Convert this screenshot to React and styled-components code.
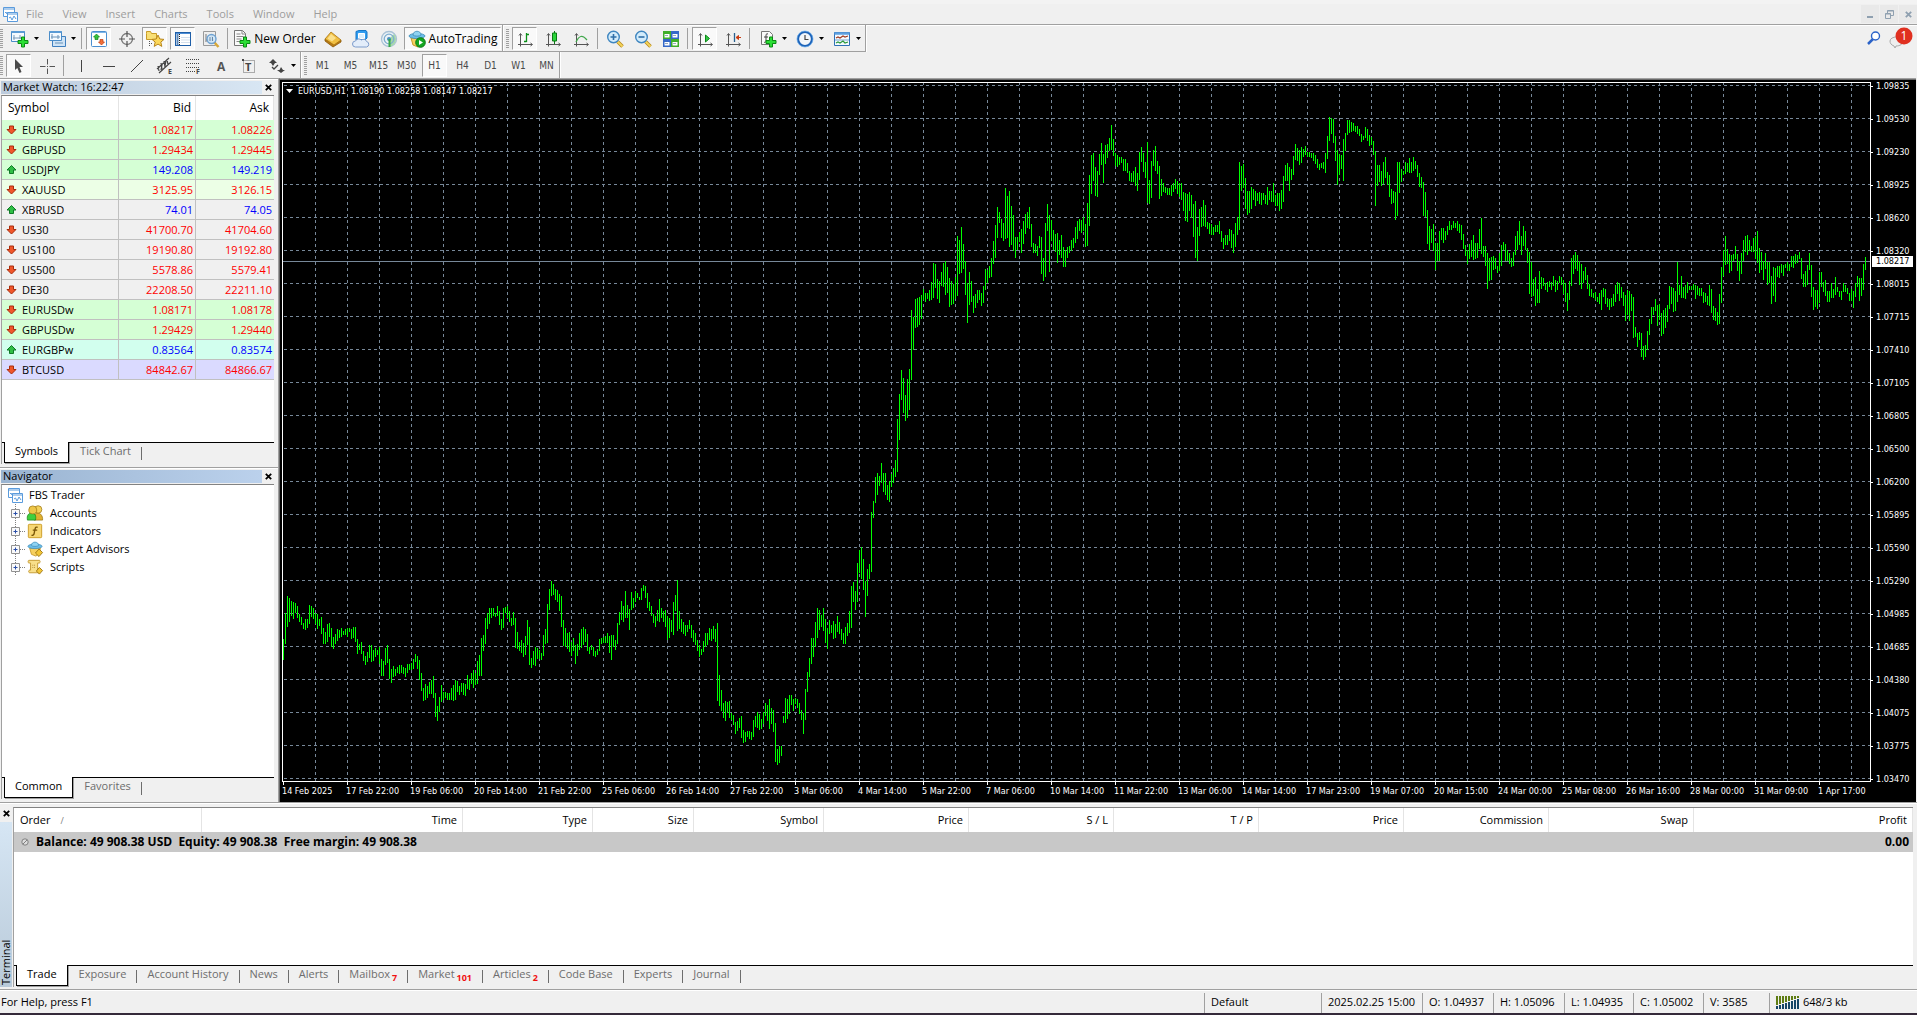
import React from 'react'
import styled, { createGlobalStyle, css } from 'styled-components'

const GlobalStyle = createGlobalStyle`
    * {
        box-sizing: border-box;
    }
    body {
        margin: 0;
        background: #f0f0f0;
        color: #000;
        font: 11px/16px 'Open Sans', 'Noto Sans', sans-serif;
    }
    button {
        font: inherit;
        color: inherit;
        margin: 0;
        padding: 0;
        border: 0;
        background: none;
    }
    table {
        border-collapse: separate;
        border-spacing: 0;
        table-layout: fixed;
        width: 100%;
    }
    svg {
        display: block;
        flex: none;
    }
`

const Page = styled.div`
    display: flex;
    flex-direction: column;
    min-height: 100vh;
    border-top: 4px solid #f3f3f3;
    border-bottom: 2px solid #352a3a;
`

/* ---------- menu ---------- */

const MenuBar = styled.header`
    display: flex;
    align-items: center;
    height: 20px;
    padding-left: 3px;
`

const MenuNav = styled.nav`
    display: flex;
    flex: 1;
    gap: 1px;
`

const MenuItem = styled.button`
    color: #9d9d9d;
    padding: 0 9px;
    &:first-child {
        padding-left: 8px;
    }
`

const WindowButtons = styled.div`
    display: flex;
    gap: 1px;
`

const WindowButton = styled.button`
    display: flex;
    align-items: center;
    justify-content: center;
    width: 18px;
    height: 18px;
    background: #e9e9e9;
`

/* ---------- toolbars ---------- */

const ToolRow = styled.div`
    display: flex;
    height: ${(p) => (p.$first ? 28 : 26)}px;
    border-top: ${(p) => (p.$first ? '1px solid #a0a0a0' : '0')};
    box-shadow: ${(p) => (p.$first ? 'inset 0 1px #fff' : 'none')};
`

const ToolGroup = styled.div`
    display: flex;
    align-items: center;
    gap: 3px;
    padding: 1px ${(p) => p.$end || 0}px 0 0;
    border-right: 1px solid #a0a0a0;
    border-bottom: ${(p) => (p.$line ? '1px solid #a0a0a0' : '0')};
    box-shadow: 1px 0 #fff;
`

const Grip = styled.div`
    width: 3px;
    height: 20px;
    margin-left: ${(p) => p.$before || 0}px;
    background: repeating-linear-gradient(#a0a0a0 0 1px, #f0f0f0 1px 2px);
`

const Divider = styled.div`
    width: 1px;
    height: 21px;
    margin: 0 1px;
    background: #a0a0a0;
`

const ToolButton = styled.button`
    display: flex;
    align-items: center;
    justify-content: center;
    gap: ${(p) => p.$gap || 3}px;
    width: ${(p) => p.$width || 25}px;
    height: 23px;
    border: 1px solid transparent;
    font-size: 12px;
    white-space: nowrap;
    ${(p) =>
        p.$pressed &&
        css`
            background: #f9f9f9;
            border-color: #a0a0a0 #fff #fff #a0a0a0;
        `}
`

const PeriodButton = styled(ToolButton)`
    font: 10px 'DejaVu Sans Condensed', 'DejaVu Sans', sans-serif;
    color: #4a4a4a;
`

const DropPair = styled.div`
    display: flex;
    margin-right: ${(p) => (p.$tight ? -3 : 0)}px;
`

const Spacer = styled.div`
    flex: 1;
`

const RightTools = styled.div`
    display: flex;
    align-items: center;
    gap: 8px;
    padding: 0 4px 2px 0;
`

/* ---------- docked panels ---------- */

const Workspace = styled.main`
    display: flex;
    flex: 1;
`

const Dock = styled.aside`
    display: flex;
    flex-direction: column;
    width: 279px;
    border-right: 1px solid #a0a0a0;
`

const DockPanel = styled.section`
    display: flex;
    flex-direction: column;
    flex: ${(p) => (p.$grow ? '1' : '0 0 389px')};
    border-top: 1px solid #a0a0a0;
    box-shadow: inset 0 1px #fff;
    padding: 2px 4px 3px 1px;
`

const DockTitle = styled.div`
    display: flex;
    align-items: center;
    height: 13px;
    margin: 0 -1px 1px 0;
`

const DockCaption = styled.h2`
    flex: 1;
    height: 13px;
    margin: 0;
    padding-left: 2px;
    font: 11px/12px 'Open Sans', sans-serif;
    background: linear-gradient(90deg, ${(p) => p.$from}, ${(p) => p.$to});
`

const CloseButton = styled.button`
    display: flex;
    align-items: center;
    justify-content: center;
    width: 13px;
    height: 13px;
`

const DockFrame = styled.div`
    display: flex;
    flex-direction: column;
    flex: 1;
    min-height: 0;
    background: #fff;
    border-top: 1px solid #828282;
    border-left: 1px solid #a0a0a0;
`

const FrameBody = styled.div`
    flex: 1;
    min-height: 0;
`

const TabBar = styled.div`
    display: flex;
    gap: 1px;
    height: 22px;
    padding-left: 2px;
    background: #f0f0f0;
    border-top: 1px solid #000;
`

const Tab = styled.button`
    position: relative;
    height: 20px;
    margin-top: -1px;
    padding: 0 10px 2px;
    color: #6d6d6d;
    white-space: nowrap;
    &::after {
        content: '';
        position: absolute;
        right: -1px;
        top: 5px;
        height: 13px;
        border-right: 1px solid #6d6d6d;
    }
    ${(p) =>
        p.$active &&
        css`
            height: 21px;
            color: #000;
            background: #fff;
            border: solid #000;
            border-width: 0 1px 1px;
            box-shadow: 1px 1px #a0a0a0;
            &::after {
                display: none;
            }
        `}
`

const TabCount = styled.sub`
    margin-left: 2px;
    font-size: 9px;
    line-height: 1px;
    font-weight: bold;
    color: #f01010;
`

const QuoteTable = styled.table`
    th {
        height: 24px;
        padding: 0 4px 0 6px;
        font-size: 12px;
        font-weight: normal;
        text-align: right;
        border-right: 1px solid #e4e4e4;
    }
    th:first-child {
        text-align: left;
    }
`

const QuoteRow = styled.tr`
    background: ${(p) => p.$bg};
    td {
        height: 20px;
        padding: 0 2px;
        text-align: right;
        line-height: 16px;
        color: ${(p) => (p.$up ? '#0000ff' : '#ff0000')};
        border-right: 1px solid #c0c0c0;
        border-bottom: 1px solid #c0c0c0;
    }
    td:last-child {
        border-right: 0;
    }
    td:first-child {
        color: #000;
    }
`

const SymbolCell = styled.div`
    display: flex;
    align-items: center;
    gap: 5px;
    padding-left: 2px;
`

const Tree = styled.ul`
    margin: 0;
    padding: 1px 0 0 6px;
    list-style: none;
`

const TreeRoot = styled.li`
    display: flex;
    align-items: center;
    gap: 6px;
    height: 18px;
`

const TreeNode = styled.li`
    display: flex;
    align-items: center;
    height: 18px;
    padding-left: 3px;
`

const NodeText = styled.span`
    padding-left: 7px;
`

/* ---------- chart ---------- */

const ChartWindow = styled.section`
    display: grid;
    grid-template: minmax(0, 1fr) 20px / minmax(0, 1fr) 45px;
    flex: 1;
    min-width: 0;
    padding: 2px 0 0 2px;
    margin-right: 1px;
    border-top: 1px solid #a0a0a0;
    border-left: 1px solid #696969;
    background: #000;
    box-shadow: inset 0 1px #696969;
    color: #fff;
    font: 9px/10px 'DejaVu Sans Condensed', 'DejaVu Sans', sans-serif;
`

const Plot = styled.div`
    position: relative;
    display: flex;
    margin-top: 1px;
    border: 1px solid #fff;
`

const PlotSvg = styled.svg`
    flex: 1;
    width: 100%;
    height: 100%;
`

const ChartTitle = styled.div`
    position: absolute;
    top: 3px;
    left: 3px;
    display: flex;
    align-items: center;
    gap: 5px;
    white-space: pre;
`

const PriceAxis = styled.div`
    position: relative;
    grid-row: 1 / 3;
    grid-column: 2;
    min-height: 0;
    overflow: hidden;
`

const PriceMark = styled.div`
    display: flex;
    align-items: center;
    gap: 3px;
    height: 10px;
    & + & {
        margin-top: 23px;
    }
    &::before {
        content: '';
        width: 2px;
        height: 1px;
        background: #fff;
    }
`

const LastPrice = styled.div`
    position: absolute;
    left: 1px;
    padding: 0 4px;
    line-height: 11px;
    color: #000;
    background: #fff;
`

const TimeAxis = styled.div`
    display: flex;
    overflow: hidden;
`

const TimeMark = styled.div`
    flex: none;
    width: 64px;
    white-space: nowrap;
    &::before {
        content: '';
        display: block;
        width: 1px;
        height: 3px;
        margin: 0 0 1px 1px;
        background: #fff;
    }
`

/* ---------- terminal ---------- */

const Terminal = styled.section`
    display: flex;
    height: 187px;
    padding: 4px 1px 2px 0;
    border-top: 1px solid #a0a0a0;
    box-shadow: inset 0 1px #fff;
`

const TerminalStrip = styled.div`
    display: flex;
    flex-direction: column;
    width: 13px;
`

const TerminalCaption = styled.h2`
    flex: 1;
    width: 12px;
    margin: 2px 0 0;
    font: 11px/12px 'Open Sans', sans-serif;
    writing-mode: vertical-rl;
    transform: rotate(180deg);
    padding-top: 2px;
    background: linear-gradient(#b9cad9, #d6e6f4);
`

const TerminalFrame = styled(DockFrame)`
    margin-right: 3px;
`

const TradeTable = styled.table`
    th {
        height: 24px;
        padding: 0 5px;
        font-weight: normal;
        text-align: right;
        border-right: 1px solid #e4e4e4;
    }
    th:first-child {
        text-align: left;
        padding-left: 6px;
    }
    td {
        height: 20px;
        padding: 0 4px 0 7px;
        font-size: 12px;
        font-weight: bold;
        text-align: right;
        white-space: pre;
        background: #c8c8c8;
    }
`

const BalanceCell = styled.div`
    display: flex;
    align-items: center;
    gap: 7px;
`

const SortMark = styled.span`
    margin-left: 10px;
    font-size: 9px;
    color: #808080;
`

const StatusBar = styled.footer`
    display: flex;
    height: 24px;
    border-top: 1px solid #a0a0a0;
    box-shadow: inset 0 1px #fff;
`

const StatusCell = styled.div`
    display: flex;
    align-items: center;
    gap: 4px;
    width: ${(p) => p.$width}px;
    margin-top: 3px;
    padding: 0 0 2px 6px;
    border-left: 1px solid #a0a0a0;
`

const StatusHelp = styled.div`
    flex: 1;
    padding: 4px 0 0 1px;
`

/* ---------- icons ---------- */

const IconSvg = styled.svg`
    overflow: visible;
`

const Icon = ({ size = 18, children }) => (
    <IconSvg width={size} height={size} viewBox='0 0 18 18' fill='none' aria-hidden='true'>
        {children}
    </IconSvg>
)

const Caret = () => (
    <svg width='5' height='3' viewBox='0 0 5 3' aria-hidden='true'>
        <path d='M0 0h5L2.5 3z' fill='#000' />
    </svg>
)

const Plus = ({ x = 6, y = 6 }) => (
    <path
        transform={`translate(${x} ${y})`}
        d='M4.500 1h3v3.500H11v3H7.500V11h-3V7.500H1v-3h3.500z'
        fill='#2ade34'
        stroke='#0a8a12'
    />
)

const Close = ({ color = '#000' }) => (
    <svg width='7' height='7' viewBox='0 0 7 7' aria-hidden='true'>
        <path d='M.8.8l5.400 5.400M6.200.8L.8 6.200' stroke={color} strokeWidth='1.800' />
    </svg>
)

const AppIcon = () => (
    <svg width='15' height='15' viewBox='0 0 15 15' fill='#fff' stroke='#5a9bdc' aria-hidden='true'>
        <path d='M.5.5h11v9H.5z' />
        <path d='M.5 2h11' />
        <path d='M2 6l1-1 1 2 1-2' fill='none' />
        <path d='M4.500 5.500h10v9h-10z' />
        <path d='M4.500 7h10' />
        <path d='M6 11l1.500-1 1.500 3 2-4 2 3' fill='none' />
    </svg>
)

const NewChartIcon = () => (
    <Icon>
        <path d='M.5 1.500h13v10H.5z' fill='#f5faff' stroke='#4a8cc8' />
        <path d='M.5 2h13' stroke='#5b9bd5' strokeWidth='2' />
        <path d='M3 5v5M2 8h8M9 5v4' stroke='#7a9ab8' />
        <Plus />
    </Icon>
)

const ProfilesIcon = () => (
    <Icon>
        <path d='M4.500 6.500h13v10h-13z' fill='#cfe3f5' stroke='#3f7fbf' />
        <path d='M1.500 1.500h12v9h-12z' fill='#f5faff' stroke='#4a8cc8' />
        <path d='M1.500 2h12' stroke='#5b9bd5' strokeWidth='2' />
        <path d='M4 4v5M3 7h9M10 5v4M7 13h8' stroke='#6b93b8' />
    </Icon>
)

const MarketIcon = () => (
    <Icon>
        <rect x='1.500' y='1.500' width='15' height='15' rx='1' fill='#fff' stroke='#4a8fd0' />
        <path d='M2 2.500h14' stroke='#7db5e8' />
        <path d='M6.500 4l3 3H8v2.500H5V7H3.500z' fill='#35c13d' stroke='#0f8718' strokeWidth='.7' />
        <path d='M11.500 15l-3-3H10V9.500h3V12h1.500z' fill='#f0703a' stroke='#c03a10' strokeWidth='.7' />
    </Icon>
)

const TargetIcon = () => (
    <Icon>
        <circle cx='9' cy='9' r='5.500' stroke='#777' strokeWidth='1.300' />
        <path d='M9 1v6M9 11v6M1 9h6M11 9h6' stroke='#555' strokeWidth='1.200' />
    </Icon>
)

const NavigatorIcon = () => (
    <Icon>
        <path d='M0.500 3.500v-2h4l1 2h5v6H.5z' fill='#f8df76' stroke='#c99b26' />
        <path d='M3.500 11v6M6 13.500H3' stroke='#555' strokeDasharray='1 1' />
        <path d='M12 5l1.800 4 4.200.4-3.200 2.700 1 4.300-3.800-2.300-3.800 2.300 1-4.300L6 9.400l4.200-.4z' fill='#fcd85a' stroke='#b8861c' />
    </Icon>
)

const TerminalIcon = () => (
    <Icon>
        <rect x='1.500' y='2.500' width='15' height='13' fill='#fff' stroke='#1f5fa8' />
        <path d='M2 3.500h14' stroke='#4c8dd6' />
        <path d='M3.500 4v11' stroke='#5b87b8' strokeWidth='2' />
        <path d='M5.500 4v11' stroke='#222' strokeDasharray='1 1' />
        <path d='M7 7.500h9M7 10h9M7 12.500h9' stroke='#d3dfec' />
    </Icon>
)

const TesterIcon = () => (
    <Icon>
        <path d='M1.500 1.500h12v14h-12z' fill='#eee' stroke='#9a9a9a' />
        <path d='M4 4v8M4 10h8M10 4v6' stroke='#777' />
        <path d='M12 12l4.500 5' stroke='#d8a838' strokeWidth='2.500' />
        <circle cx='9.500' cy='9' r='4.500' fill='#cfe6f8' fillOpacity='.85' stroke='#6ea2d2' strokeWidth='1.400' />
        <path d='M8 7v4M10.500 7v4' stroke='#6688aa' />
    </Icon>
)

const OrderIcon = () => (
    <Icon>
        <path d='M1.500.5h8l3 3v12h-11z' fill='#fafafa' stroke='#777' />
        <path d='M9 .5V4h3.500M3.500 4h4M3.500 6.500h7M3.500 9h5M3.500 11.500h4' stroke='#888' />
        <Plus />
    </Icon>
)

const EditorIcon = () => (
    <Icon>
        <path d='M1 9l8 5 8-4v2l-8 5-8-6z' fill='#b97912' stroke='#8a5a0c' strokeWidth='.8' />
        <path d='M1 9l6-7 10 8-7 5z' fill='#f0bf42' stroke='#a8720f' strokeWidth='.8' />
        <path d='M3.500 8.500L7 4l5 4-4 3.500z' fill='#fbe08c' />
    </Icon>
)

const CloudIcon = () => (
    <Icon>
        <path d='M4 1.500l3-1h7l1 1.500v6l-2 2H4z' fill='#2f9cf0' stroke='#1676c8' />
        <path d='M6.500 3.500h6v5h-6z' fill='#d9efff' stroke='#fff' />
        <path d='M3.500 17a3 3 0 010-6 3.500 3 0 016-1 3 2.600 0 015 1.500 2.800 2.800 0 010 5.500z' fill='#e3edfa' stroke='#7d9ccc' />
    </Icon>
)

const SignalIcon = () => (
    <Icon>
        <circle cx='9' cy='9' r='7.500' fill='#edf3f6' stroke='#a9c2d6' strokeWidth='1.300' />
        <path d='M9 9v8a8 8 0 007-8 7 7 0 00-2-5z' fill='#a6d9aa' />
        <circle cx='9' cy='9' r='4.800' stroke='#7fadd0' strokeWidth='1.300' />
        <circle cx='9' cy='9' r='2' fill='#4a8fc0' />
        <path d='M9.500 9v8' stroke='#38a848' strokeWidth='2' />
    </Icon>
)

const HatShape = () => (
    <g>
        <path d='M3 8l2 7 5 2 4-3 1-6z' fill='#f6d060' stroke='#c99b2a' />
        <ellipse cx='9' cy='6' rx='8' ry='2.600' fill='#6bbde8' stroke='#3f8cb8' strokeWidth='.8' />
        <path d='M5 5c0-5 8-5 8 0-1 1.500-7 1.500-8 0z' fill='#8fd3f2' stroke='#3f8cb8' strokeWidth='.8' />
    </g>
)

const AutoIcon = () => (
    <Icon>
        <HatShape />
        <circle cx='12.500' cy='12.500' r='4.800' fill='#14a620' stroke='#0b7a14' />
        <path d='M11 10l4 2.500-4 2.500z' fill='#fff' />
    </Icon>
)

const Axes = () => (
    <path d='M4.500 4v12.500M2 14.500h14M3 5.500l1.500-2 1.500 2M14.500 13l2 1.500-2 1.500' stroke='#555' />
)

const BarsIcon = () => (
    <Icon>
        <Axes />
        <path d='M10.500 3v9M10.500 4.500H13M8 11.500h2.500' stroke='#0a8f18' strokeWidth='1.300' />
    </Icon>
)

const CandleIcon = () => (
    <Icon>
        <Axes />
        <path d='M10.500 1v13' stroke='#0a7a14' />
        <path d='M8.500 3h4v8h-4z' fill='#2ad43a' stroke='#0a7a14' />
    </Icon>
)

const LineIcon = () => (
    <Icon>
        <Axes />
        <path d='M4 12c3-6 6-8 11-2' stroke='#42a84c' strokeWidth='1.300' />
    </Icon>
)

const ZoomIcon = ({ plus }) => (
    <Icon>
        <path d='M11.500 11.500l5 5' stroke='#b88a1e' strokeWidth='3.500' />
        <path d='M11.500 11.500l5 5' stroke='#f4d55c' strokeWidth='1.800' />
        <circle cx='7.500' cy='7' r='5.800' fill='#d3ecfb' stroke='#3f86c0' strokeWidth='1.400' />
        <path d={plus ? 'M4.500 7h6M7.500 4v6' : 'M4.500 7h6'} stroke='#2f6fa8' strokeWidth='1.600' />
    </Icon>
)

const TileIcon = () => (
    <Icon>
        <path d='M1 1h8v8H1zM9 9h8v8H9z' fill='#3fae2a' />
        <path d='M9 1h8v8H9zM1 9h8v8H1z' fill='#3568c8' />
        <path d='M2.500 4h5v3.500h-5zM10.500 4h5v3.500h-5zM2.500 12h5v3.500h-5zM10.500 12h5v3.500h-5z' fill='#fff' />
        <path d='M3 5.500h3M11 5.500h3M3 13.500h3M11 13.500h3' stroke='#9ab' />
    </Icon>
)

const ScrollIcon = () => (
    <Icon>
        <Axes />
        <path d='M9.500 5l4 3.500-4 3.500z' fill='#35c844' stroke='#0a8a18' />
    </Icon>
)

const ShiftIcon = () => (
    <Icon>
        <Axes />
        <path d='M10.500 3v9' stroke='#27608f' strokeWidth='1.300' />
        <path d='M17 7.500h-4M14.500 5.500l-2.500 2 2.500 2z' stroke='#c83a10' fill='#c83a10' />
    </Icon>
)

const IndicatorIcon = () => (
    <Icon>
        <path d='M2.500 1.500h8l3 3v10h-11z' fill='#fafafa' stroke='#777' />
        <path d='M9 4c-2-1-2 1-2 2v5c0 1-1 2-2 1M5 7h4' stroke='#444' />
        <Plus />
    </Icon>
)

const ClockIcon = () => (
    <Icon>
        <circle cx='9' cy='9' r='7' fill='#f2f6fa' stroke='#1d63b8' strokeWidth='2.200' />
        <circle cx='9' cy='9' r='8' stroke='#6fb0ee' strokeWidth='.7' />
        <path d='M9 5v4.500h3.500' stroke='#444' strokeWidth='1.200' />
    </Icon>
)

const TemplateIcon = () => (
    <Icon>
        <path d='M1.500 2.500h15v13h-15z' fill='#f4faff' stroke='#2f70b5' />
        <path d='M1.500 3.500h15' stroke='#5d9fe0' strokeWidth='2.500' />
        <path d='M3 8l2-1 2 1 3-2 2 1 3-1' stroke='#a03a20' strokeWidth='1.200' />
        <path d='M2 10h14' stroke='#7aa8d0' />
        <path d='M3 13l2-1 2 1 3-2 2 2 3-1' stroke='#2b9a3c' strokeWidth='1.200' />
    </Icon>
)

const CursorIcon = () => (
    <Icon>
        <path d='M5 2l8 8H9.500l2 5-2 1-2.200-5L5 13z' fill='#4a4a4a' />
    </Icon>
)

const CrossIcon = () => (
    <Icon>
        <path d='M9.500 2v5.500M9.500 11.500V17M2 9.500h5.500M11.500 9.500H17' stroke='#555' />
        <path d='M9.500 9v1' stroke='#555' />
    </Icon>
)

const StrokeIcon = ({ d }) => (
    <Icon>
        <path d={d} stroke='#444' />
    </Icon>
)

const ChannelIcon = () => (
    <Icon>
        <path d='M1 12L13 1M3 16L15 5M2 9l1 5M5 6l1 6M8 4l1 6M11 2l1 6M5 13l1-5M9 9l1-5' stroke='#444' strokeWidth='1.200' />
        <text x='12' y='17' fontSize='7' fontWeight='bold' fill='#444'>E</text>
    </Icon>
)

const FiboIcon = () => (
    <Icon>
        <path d='M2 2.500h14M2 6.500h14M2 10.500h14M2 14.500h9' stroke='#444' strokeDasharray='1 1' />
        <text x='12' y='17' fontSize='7' fontWeight='bold' fill='#444'>F</text>
    </Icon>
)

const TextIcon = () => (
    <Icon>
        <text x='5' y='14' fontSize='12' fontWeight='bold' fill='#555'>A</text>
    </Icon>
)

const LabelIcon = () => (
    <Icon>
        <path d='M3.500 3.500h11v12h-11z' stroke='#666' strokeDasharray='1 1' />
        <path d='M2 2h2v2H2z' fill='#444' />
        <text x='5' y='14' fontSize='11' fontWeight='bold' fill='#444'>T</text>
    </Icon>
)

const ArrowsIcon = () => (
    <Icon>
        <path d='M5 2l4 4H7L5 9 3 6H1zM13 16l-4-3h2.500l1.500-3 2 3h2z' fill='#444' />
        <path d='M4 10l2 2 4-4' stroke='#444' strokeWidth='1.300' />
    </Icon>
)

const SearchIcon = () => (
    <svg width='14' height='14' viewBox='0 0 14 14' fill='none' aria-hidden='true'>
        <path d='M6 8l-5 5' stroke='#2a62c8' strokeWidth='2.500' />
        <circle cx='8.500' cy='5' r='4' fill='#fff' stroke='#2a62c8' strokeWidth='1.400' />
    </svg>
)

const ChatIcon = () => (
    <svg width='24' height='22' viewBox='0 0 24 22' fill='none' aria-hidden='true'>
        <path d='M1 14c0-5 13-6 13 0 0 3-3 5-7 5l-1 2-1-2c-3-1-4-3-4-5z' fill='#eee' stroke='#a9a9a9' />
        <circle cx='15' cy='9' r='8.500' fill='#e03020' />
        <text x='15' y='13' textAnchor='middle' fontSize='12' fill='#fff'>1</text>
    </svg>
)

const Trend = ({ up }) => (
    <svg width='11' height='10' viewBox='0 0 11 10' aria-hidden='true'>
        <path
            d='M5.500.5L10 5H7.500v3.500h-4V5H1z'
            transform={up ? undefined : 'rotate(180 5.500 4.750)'}
            fill={up ? '#2fbf45' : '#f0562a'}
            stroke={up ? '#0f7a26' : '#a82c0c'}
        />
    </svg>
)

const Expander = () => (
    <svg width='16' height='18' viewBox='0 0 16 18' fill='none' aria-hidden='true'>
        <path d='M4.500 0v5M4.500 14v4M9 9.500h6' stroke='#808080' strokeDasharray='1 1' />
        <path d='M.5 5.500h8v8h-8z' fill='#fafafa' stroke='#919191' />
        <path d='M2.500 9.500h4M4.500 7.500v4' stroke='#2b4fa8' />
    </svg>
)

const PeopleIcon = () => (
    <Icon size={16}>
        <path d='M8 17c-1-5 1-8 4-8s6 3 5.500 8z' fill='#e0b030' stroke='#9a720c' strokeWidth='.8' />
        <circle cx='12.500' cy='5' r='4.200' fill='#f4d25c' stroke='#9a720c' strokeWidth='.8' />
        <path d='M.5 17c-1-5 1-8 5-8s5 4 4 8z' fill='#3fcf3f' stroke='#148214' strokeWidth='.8' />
        <circle cx='6.500' cy='5.500' r='4.500' fill='#eec648' stroke='#9a720c' strokeWidth='.8' />
    </Icon>
)

const FunctionIcon = () => (
    <Icon size={16}>
        <rect x='1.500' y='1.500' width='15' height='15' rx='1' fill='#f7d774' stroke='#c9981f' />
        <path d='M12 5c-2-1-2.500 0-3 2l-1 5c-.3 2-1 2-3 2M6.500 8h5' stroke='#7a5608' strokeWidth='1.500' />
    </Icon>
)

const AdvisorIcon = () => (
    <Icon size={16}>
        <HatShape />
        <path d='M13.500 9l4 4-4 4.500-4-4z' fill='#f2c637' stroke='#9a7210' />
    </Icon>
)

const ScriptIcon = () => (
    <Icon size={16}>
        <path d='M2 1.500h12c1 0 1 3 0 3H12v8h2v3H3c-1.500 0-1.500-3 0-3h1v-8H2c-1 0-1-3 0-3z' fill='#f8df8a' stroke='#c1952a' />
        <path d='M6 7h4M6 9.500h4' stroke='#a88430' strokeDasharray='1 1' />
        <path d='M14 9.500l3.500 3.500-3.500 4-3.500-3.500z' fill='#f2c637' stroke='#9a7210' />
    </Icon>
)

const TrafficIcon = () => (
    <svg width='23' height='13' viewBox='0 0 23 13' aria-hidden='true'>
        {[0, 1, 2, 3, 4, 5, 6, 7].map((i) => (
            <g key={i}>
                <rect x={i * 3} width='2' height={9 - i} fill='#5f7d14' />
                <rect x={i * 3} y={10 - i} width='2' height={3 + i} fill='#154566' />
            </g>
        ))}
    </svg>
)

/* ---------- data ---------- */

const quotes = [
    ['EURUSD', '1.08217', '1.08226', false, '#d5ffd5'],
    ['GBPUSD', '1.29434', '1.29445', false, '#d5ffd5'],
    ['USDJPY', '149.208', '149.219', true, '#d5ffd5'],
    ['XAUUSD', '3125.95', '3126.15', false, '#ecffe6'],
    ['XBRUSD', '74.01', '74.05', true, '#f0f0f0'],
    ['US30', '41700.70', '41704.60', false, '#f0f0f0'],
    ['US100', '19190.80', '19192.80', false, '#f0f0f0'],
    ['US500', '5578.86', '5579.41', false, '#f0f0f0'],
    ['DE30', '22208.50', '22211.10', false, '#f0f0f0'],
    ['EURUSDw', '1.08171', '1.08178', false, '#d5ffd5'],
    ['GBPUSDw', '1.29429', '1.29440', false, '#d5ffd5'],
    ['EURGBPw', '0.83564', '0.83574', true, '#d2ffee'],
    ['BTCUSD', '84842.67', '84866.67', false, '#dadaff'],
]

const tradeColumns = [
    ['Order', 188],
    ['Time', 261],
    ['Type', 130],
    ['Size', 101],
    ['Symbol', 130],
    ['Price', 145],
    ['S / L', 145],
    ['T / P', 145],
    ['Price', 145],
    ['Commission', 145],
    ['Swap', 145],
    ['Profit', undefined],
]

const terminalTabs = [
    ['Exposure'],
    ['Account History'],
    ['News'],
    ['Alerts'],
    ['Mailbox', 7],
    ['Market', 101],
    ['Articles', 2],
    ['Code Base'],
    ['Experts'],
    ['Journal'],
]

const status = [
    ['Default', 117],
    ['2025.02.25 15:00', 101],
    ['O: 1.04937', 71],
    ['H: 1.05096', 71],
    ['L: 1.04935', 69],
    ['C: 1.05002', 70],
    ['V: 3585', 66],
]

const prices = [
    '1.09835', '1.09530', '1.09230', '1.08925', '1.08620', '1.08320', '1.08015', '1.07715',
    '1.07410', '1.07105', '1.06805', '1.06500', '1.06200', '1.05895', '1.05590', '1.05290',
    '1.04985', '1.04685', '1.04380', '1.04075', '1.03775', '1.03470',
]

const times = [
    '14 Feb 2025', '17 Feb 22:00', '19 Feb 06:00', '20 Feb 14:00', '21 Feb 22:00', '25 Feb 06:00',
    '26 Feb 14:00', '27 Feb 22:00', '3 Mar 06:00', '4 Mar 14:00', '5 Mar 22:00', '7 Mar 06:00',
    '10 Mar 14:00', '11 Mar 22:00', '13 Mar 06:00', '14 Mar 14:00', '17 Mar 23:00', '19 Mar 07:00',
    '20 Mar 15:00', '24 Mar 00:00', '25 Mar 08:00', '26 Mar 16:00', '28 Mar 00:00', '31 Mar 09:00',
    '1 Apr 17:00',
]

// high-low pairs per hour, three units to a pixel, counted down from the block's base
const blocks = [
    {
        x: 0,
        base: 477,
        bars: `237-300 160-252 108-201 114-186 123-168 126-177 129-159 138-174 162-186 171-195
        189-207 177-210 177-204 135-192 138-171 144-177 160-192 162-207 177-198 171-222
        204-252 216-252 192-246 189-231 204-261 231-267 222-252 207-243 210-234 204-231
        213-225 207-225 204-231 204-216 207-237 201-234 201-246 237-282 252-270 246-282
        273-303 288-315 276-306 255-294 255-306 270-303 264-291 270-285 261-312 297-348
        303-348 264-315 255-309 297-357 327-369 318-351 327-348 321-339 315-342 315-339
        321-342 324-351 312-339 312-330 309-330 297-327 282-306 288-327 300-360 339-393
        384-423 372-420 378-414 366-402 360-402 348-414 399-471 438-483 411-456 375-426
        396-420 396-414 399-420 399-420 384-420 375-423 360-420 363-396 378-405 369-396
        369-405 372-408 345-387 357-390 339-372 330-384 339-375 303-372 285-348 234-348
        225-273 174-252 159-207 144-192 144-174 144-168 159-171 138-168 153-195 177-210
        144-204 141-159 138-174 153-186 174-198 156-195 174-264 216-267 246-273 240-279
        249-291 228-285 180-255 201-315 294-324 273-315 261-318 264-297 270-297 279-300
        225-288 207-252 132-249 87-150 63-108 72-105 87-120 90-126 102-153 108-201
        180-258 204-261 219-267 216-276 246-288 234-273 255-312 252-288 219-270 207-264
        201-255 207-246 222-273 261-282 255-270 261-288 273-291 267-285 237-273 234-252
        231-249 228-249 219-249 228-279 225-300 225-261 240-270 189-252 156-195 123-180
        138-186 93-174 135-174 147-210 96-150 114-144 93-126 99-114 111-120 84-120
        75-93 78-114 99-144 126-153 138-168 162-189 168-201 150-183 117-186 144-174
        153-186 150-201 168-240 174-234 180-216 126-225 105-153 60-213 153-207 177-216
        186-222 195-228 195-216 180-207 195-234 210-246 219-255 240-273 255-291 267-285
        243-276 219-261 219-255 204-240 207-243 198-237 207-246 189-423 345-438 390-453
        429-474 423-483 426-459 423-474 459-480 465-495 486-522 483-513 474-504 468-534
        510-549 516-546 513-531 513-537 516-540 480-531 468-501 456-504 462-510 477-507
        456-492 429-468 435-483 417-507 444-492 450-516 489-606 567-615 558-609`,
    },
    {
        x: 498,
        base: 227,
        bars: `1308-1338 1218-1239 1164-1239 1167-1227 1155-1212 1155-1185 1167-1203 1164-1182 1167-1194 1179-1212
        1200-1230 1209-1272 1137-1230 1086-1146 1044-1101 984-1062 984-1041 936-1011 894-984 900-960
        915-951 894-963 927-999 954-1017 930-972 945-969 933-987 942-984 918-966 936-972
        957-990 969-1002 951-1002 939-978 903-969 828-954 816-876 843-900 759-876 720-789
        711-807 747-840 813-921 777-858 762-807 606-786 573-624 501-579 489-555 498-528
        459-519 489-546 489-555 525-570 513-576 492-531 474-519 450-501 327-486 252-390
        180-270 204-309 255-333 207-324 177-300 0-210 21-120`,
    },
    {
        x: 632,
        base: 167,
        bars: `147-234 144-231 141-225 135-207 117-150 129-156 129-147 120-153 96-150 39-144
        42-114 87-147 93-159`,
    },
    {
        x: 658,
        base: -5,
        bars: `582-624 555-627 549-651 567-645 600-687 609-681 618-678 597-663 474-654 486-588
        447-585 498-573 549-651 615-735 582-681 609-672 654-705 648-690 636-675 636-666
        645-684 624-675 573-636 576-615 564-600 540-597 489-558 441-540 387-480 402-435
        423-480 435-489 330-483 354-480 339-507 384-501 411-519 477-540 477-516 462-492
        453-525 429-498 408-468 402-450 387-453 438-507 495-525 498-525 504-534 474-510
        477-588 540-609 435-597 378-459 411-582 426-489 456-516 468-522 465-555 486-531
        471-540 507-567 516-567 507-540 504-525 486-519 480-510 447-495 429-483 423-459
        426-465 417-459 438-507 375-504 291-444 231-348 225-309 267-354 279-357 228-291
        195-261 228-315 201-258 198-240 180-219 141-216 183-234 225-264 231-267 237-261
        237-255 243-279 243-279 255-285 279-309 285-312 279-312 267-324 285-339 222-306
        207-252 225-282 252-300 192-375 306-378 249-360 216-264 204-279 249-288 264-363
        303-354 315-342 327-345 330-351 330-351 321-354 315-342 303-333 309-348 315-357
        315-366 342-399 345-429 348-432 342-399 351-420 378-477 369-540 447-549 393-474
        387-447 366-444 381-447 432-453 435-468 438-471 447-471 441-462 441-462 429-468
        459-492 480-513 471-501 471-501 453-489 456-510 468-525 435-507 417-471 252-456
        264-339 258-330 300-393 339-411 339-405 327-393 333-366 339-384 345-369 342-378
        345-381 345-366 351-378 327-381 339-366 339-372 315-372 351-384 345-384 345-399
        336-393 294-372 261-309 255-309 267-339 273-306 234-291 198-246 210-249 216-261
        207-255 213-237 204-231 222-237 222-237 225-240 225-249 231-258 243-270 258-276
        255-270 252-273 225-285 174-243 117-189 120-168 123-195 174-249 216-321 228-291
        231-273 183-309 165-219 126-171 126-165 132-162 135-159 144-162 144-168 153-174
        168-192 174-186 147-180 153-189 171-204 177-201 189-231 219-384 261-324 261-312
        279-324 252-318 237-300 282-321 291-357 333-378 339-375 342-426 252-414 252-345
        273-312 279-291 252-288 255-282 240-285 252-285 237-279 249-273 261-297 285-327`,
    },
    {
        x: 1138,
        base: -5,
        bars: `297-330 312-414 342-417 396-498 444-516 453-495 438-519 495-576 495-549 459-549
        450-486 450-495 459-486 444-471 429-456 441-456 429-450 435-450 429-459 438-465
        441-486 468-513 501-534 516-558 498-543 486-537 471-546 495-543 495-540 453-513
        420-528 504-537 504-564 525-633 540-609 537-606 534-576 540-573 564-585 525-579
        501-564 492-516 498-549 516-549 525-558 540-567 522-564 474-531 459-516 429-501
        474-531 444-504 459-516 510-555 522-648 552-657 603-654 597-684 633-675 579-675
        597-633 600-624 615-636 612-642 609-627 612-636 594-624 606-642 609-636 594-615
        597-621 606-648 615-672 645-699 609-666 540-624 531-588 522-573 531-579 549-621
        558-633 579-615 567-606 591-633 618-654 633-657 645-660 642-666 657-672 645-678
        636-696 630-657 633-678 660-687 663-696 660-687 648-684 621-672 612-648 615-669
        627-660 642-684 651-729 636-711 639-729 648-699 657-780 747-777 765-807 762-786
        765-837 804-846 801-837 759-816 723-771 687-738 687-711 663-699 681-744 678-726
        705-774 696-768 690-750 681-732 624-693 627-678 630-702 639-699 552-672 621-651
        594-660 627-660 621-663 612-645 624-636 624-636 618-636 621-663 624-651 630-654
        630-654 642-675 645-672 654-681 621-684 633-705 684-726 690-729 702-741 648-738
        567-675 516-594 474-561 513-558 528-585 531-579 528-549 504-543 528-579 549-609
        525-588 486-549 474-522 471-531 486-519 504-522 480-522 474-543 459-555 510-585
        522-576 549-606 525-573 552-621 552-615 594-678 567-654 570-672 564-597 564-600
        558-585 561-594 558-570 552-579 558-579 534-567 534-570 528-558 531-555 522-543
        540-603 588-627 579-627 561-621 525-576 561-657 627-696 636-687 636-693 582-675
        582-627 612-642 606-654 639-672 639-672 615-660 633-660 597-651 627-642 639-657
        639-666 615-642 621-642 630-648 645-669 633-669 639-690 615-657 594-627 600-669
        600-654 558-636 537-576`,
    },
]

const barsPath = blocks
    .map(({ x, base, bars }) =>
        bars
            .split(/\s+/)
            .map((bar, i) => {
                const [high, low] = bar.split('-').map((v) => base + Math.round(v / 3))
                return `M${x + i * 2} ${high}h1V${low}h-1z`
            })
            .join('')
    )
    .join('')

const lastPriceY = 178

/* ---------- parts ---------- */

function Tool({ label, pressed, drop, width, children }) {
    return (
        <ToolButton
            type='button'
            aria-label={label}
            $pressed={pressed}
            $gap={drop && 5}
            $width={width || (drop ? 37 : 25)}>
            {children}
            {drop && <Caret />}
        </ToolButton>
    )
}

function Toolbars() {
    return (
        <>
            <ToolRow $first>
                <ToolGroup $line $end={1}>
                    <Grip />
                    <DropPair $tight>
                        <Tool label='New chart' drop><NewChartIcon /></Tool>
                        <Tool label='Profiles' drop><ProfilesIcon /></Tool>
                    </DropPair>
                    <Divider />
                    <Tool label='Market Watch' pressed><MarketIcon /></Tool>
                    <Tool label='Data Window'><TargetIcon /></Tool>
                    <Tool label='Navigator' pressed><NavigatorIcon /></Tool>
                    <Tool label='Terminal' pressed><TerminalIcon /></Tool>
                    <Tool label='Strategy Tester'><TesterIcon /></Tool>
                    <Divider />
                    <Tool label='New Order' width={85}><OrderIcon />New Order</Tool>
                    <Tool label='MetaEditor'><EditorIcon /></Tool>
                    <Tool label='Cloud'><CloudIcon /></Tool>
                    <Tool label='Signals'><SignalIcon /></Tool>
                    <Tool label='AutoTrading' pressed width={97}><AutoIcon />AutoTrading</Tool>
                </ToolGroup>
                <ToolGroup $line>
                    <Grip $before={3} />
                    <Tool label='Bar Chart' pressed><BarsIcon /></Tool>
                    <Tool label='Candlesticks'><CandleIcon /></Tool>
                    <Tool label='Line Chart'><LineIcon /></Tool>
                    <Divider />
                    <Tool label='Zoom In'><ZoomIcon plus /></Tool>
                    <Tool label='Zoom Out'><ZoomIcon /></Tool>
                    <Tool label='Tile Windows'><TileIcon /></Tool>
                    <Divider />
                    <Tool label='Auto Scroll' pressed><ScrollIcon /></Tool>
                    <Tool label='Chart Shift'><ShiftIcon /></Tool>
                    <Divider />
                    <DropPair>
                        <Tool label='Indicators' drop><IndicatorIcon /></Tool>
                        <Tool label='Periods' drop><ClockIcon /></Tool>
                        <Tool label='Templates' drop><TemplateIcon /></Tool>
                    </DropPair>
                </ToolGroup>
                <Spacer />
                <RightTools>
                    <button type='button' aria-label='Search'><SearchIcon /></button>
                    <button type='button' aria-label='Messages'><ChatIcon /></button>
                </RightTools>
            </ToolRow>
            <ToolRow>
                <ToolGroup>
                    <Grip />
                    <Tool label='Cursor' pressed><CursorIcon /></Tool>
                    <Tool label='Crosshair'><CrossIcon /></Tool>
                    <Divider />
                    <Tool label='Vertical Line'><StrokeIcon d='M9.500 3v12' /></Tool>
                    <Tool label='Horizontal Line'><StrokeIcon d='M3 9.500h12' /></Tool>
                    <Tool label='Trendline'><StrokeIcon d='M3 15L15 3' /></Tool>
                    <Tool label='Channel'><ChannelIcon /></Tool>
                    <Tool label='Fibonacci'><FiboIcon /></Tool>
                    <Tool label='Text'><TextIcon /></Tool>
                    <Tool label='Text Label'><LabelIcon /></Tool>
                    <Tool label='Arrows' drop width={36}><ArrowsIcon /></Tool>
                </ToolGroup>
                <ToolGroup>
                    <Grip $before={3} />
                    {['M1', 'M5', 'M15', 'M30', 'H1', 'H4', 'D1', 'W1', 'MN'].map((period) => (
                        <PeriodButton key={period} type='button' $pressed={period === 'H1'}>
                            {period}
                        </PeriodButton>
                    ))}
                </ToolGroup>
            </ToolRow>
        </>
    )
}

function MarketWatch() {
    return (
        <DockPanel>
            <DockTitle>
                <DockCaption $from='#bccbdc' $to='#d8e6f3'>Market Watch: 16:22:47</DockCaption>
                <CloseButton type='button' aria-label='Close Market Watch'><Close /></CloseButton>
            </DockTitle>
            <DockFrame>
                <FrameBody>
                    <QuoteTable>
                        <colgroup>
                            <col width='117' />
                            <col width='77' />
                            <col />
                        </colgroup>
                        <thead>
                            <tr>
                                <th>Symbol</th>
                                <th>Bid</th>
                                <th>Ask</th>
                            </tr>
                        </thead>
                        <tbody>
                            {quotes.map(([symbol, bid, ask, up, bg]) => (
                                <QuoteRow key={symbol} $up={up} $bg={bg}>
                                    <td>
                                        <SymbolCell>
                                            <Trend up={up} />
                                            {symbol}
                                        </SymbolCell>
                                    </td>
                                    <td>{bid}</td>
                                    <td>{ask}</td>
                                </QuoteRow>
                            ))}
                        </tbody>
                    </QuoteTable>
                </FrameBody>
                <TabBar>
                    <Tab type='button' $active>Symbols</Tab>
                    <Tab type='button'>Tick Chart</Tab>
                </TabBar>
            </DockFrame>
        </DockPanel>
    )
}

function Navigator() {
    return (
        <DockPanel $grow>
            <DockTitle>
                <DockCaption $from='#9ab4d1' $to='#bbd1ec'>Navigator</DockCaption>
                <CloseButton type='button' aria-label='Close Navigator'><Close /></CloseButton>
            </DockTitle>
            <DockFrame>
                <FrameBody>
                    <Tree>
                        <TreeRoot><AppIcon />FBS Trader</TreeRoot>
                        <TreeNode><Expander /><PeopleIcon /><NodeText>Accounts</NodeText></TreeNode>
                        <TreeNode><Expander /><FunctionIcon /><NodeText>Indicators</NodeText></TreeNode>
                        <TreeNode><Expander /><AdvisorIcon /><NodeText>Expert Advisors</NodeText></TreeNode>
                        <TreeNode><Expander /><ScriptIcon /><NodeText>Scripts</NodeText></TreeNode>
                    </Tree>
                </FrameBody>
                <TabBar>
                    <Tab type='button' $active>Common</Tab>
                    <Tab type='button'>Favorites</Tab>
                </TabBar>
            </DockFrame>
        </DockPanel>
    )
}

function Chart() {
    return (
        <ChartWindow>
            <Plot>
                <PlotSvg shapeRendering='crispEdges' role='img' aria-label='EURUSD hourly bars'>
                    <g stroke='#778899' strokeDasharray='3 3'>
                        {prices.map((price, i) => (
                            <line key={price} x1='1' x2='100%' y1={i * 33 + 2.5} y2={i * 33 + 2.5} />
                        ))}
                        {Array.from({ length: 49 }, (_, i) => (
                            <line
                                key={i}
                                x1={i * 32 + 32.5}
                                x2={i * 32 + 32.5}
                                y1='0'
                                y2='100%'
                                strokeDashoffset='1'
                            />
                        ))}
                    </g>
                    <rect y={lastPriceY} width='100%' height='1' fill='#778899' />
                    <path d={barsPath} fill='#00ff00' />
                </PlotSvg>
                <ChartTitle>
                    <svg width='7' height='4' viewBox='0 0 7 4' aria-hidden='true'>
                        <path d='M0 0h7L3.500 4z' fill='#fff' />
                    </svg>
                    <span>EURUSD,H1  1.08190 1.08258 1.08147 1.08217</span>
                </ChartTitle>
            </Plot>
            <PriceAxis>
                {prices.map((price) => (
                    <PriceMark key={price}>{price}</PriceMark>
                ))}
                <LastPrice style={{ top: lastPriceY - 3 }}>1.08217</LastPrice>
            </PriceAxis>
            <TimeAxis>
                {times.map((time) => (
                    <TimeMark key={time}>{time}</TimeMark>
                ))}
            </TimeAxis>
        </ChartWindow>
    )
}

function TerminalPanel() {
    return (
        <Terminal>
            <TerminalStrip>
                <CloseButton type='button' aria-label='Close Terminal'><Close /></CloseButton>
                <TerminalCaption>Terminal</TerminalCaption>
            </TerminalStrip>
            <TerminalFrame>
                <FrameBody>
                    <TradeTable>
                        <colgroup>
                            {tradeColumns.map(([, width], i) => (
                                <col key={i} width={width} />
                            ))}
                        </colgroup>
                        <thead>
                            <tr>
                                {tradeColumns.map(([name], i) => (
                                    <th key={i}>
                                        {name}
                                        {i === 0 && <SortMark>/</SortMark>}
                                    </th>
                                ))}
                            </tr>
                        </thead>
                        <tbody>
                            <tr>
                                <td colSpan={11}>
                                    <BalanceCell>
                                        <svg width='8' height='8' viewBox='0 0 8 8' fill='none' stroke='#808080' aria-hidden='true'>
                                            <circle cx='4' cy='4' r='3.200' fill='#ddd' />
                                            <path d='M2 6l4-4' />
                                        </svg>
                                        {'Balance: 49 908.38 USD  Equity: 49 908.38  Free margin: 49 908.38'}
                                    </BalanceCell>
                                </td>
                                <td>0.00</td>
                            </tr>
                        </tbody>
                    </TradeTable>
                </FrameBody>
                <TabBar>
                    <Tab type='button' $active>Trade</Tab>
                    {terminalTabs.map(([name, count]) => (
                        <Tab key={name} type='button'>
                            {name}
                            {count && <TabCount>{count}</TabCount>}
                        </Tab>
                    ))}
                </TabBar>
            </TerminalFrame>
        </Terminal>
    )
}

function App() {
    return (
        <Page>
            <GlobalStyle />
            <MenuBar>
                <AppIcon />
                <MenuNav>
                    {['File', 'View', 'Insert', 'Charts', 'Tools', 'Window', 'Help'].map((item) => (
                        <MenuItem key={item} type='button'>{item}</MenuItem>
                    ))}
                </MenuNav>
                <WindowButtons>
                    <WindowButton type='button' aria-label='Minimize'>
                        <svg width='8' height='8' viewBox='0 0 8 8'><path d='M1 6h6v2H1z' fill='#8fa0b0' /></svg>
                    </WindowButton>
                    <WindowButton type='button' aria-label='Restore'>
                        <svg width='9' height='9' viewBox='0 0 9 9' fill='none' stroke='#8fa0b0'>
                            <path d='M2.500 3V.5h6v5H6M2.500 1h6M.5 3.500h5v5h-5zM.5 4h5' />
                        </svg>
                    </WindowButton>
                    <WindowButton type='button' aria-label='Close'><Close color='#8fa0b0' /></WindowButton>
                </WindowButtons>
            </MenuBar>
            <Toolbars />
            <Workspace>
                <Dock>
                    <MarketWatch />
                    <Navigator />
                </Dock>
                <Chart />
            </Workspace>
            <TerminalPanel />
            <StatusBar>
                <StatusHelp>For Help, press F1</StatusHelp>
                {status.map(([text, width]) => (
                    <StatusCell key={text} $width={width}>{text}</StatusCell>
                ))}
                <StatusCell $width={148}>
                    <TrafficIcon />
                    648/3 kb
                </StatusCell>
            </StatusBar>
        </Page>
    )
}

export default App
